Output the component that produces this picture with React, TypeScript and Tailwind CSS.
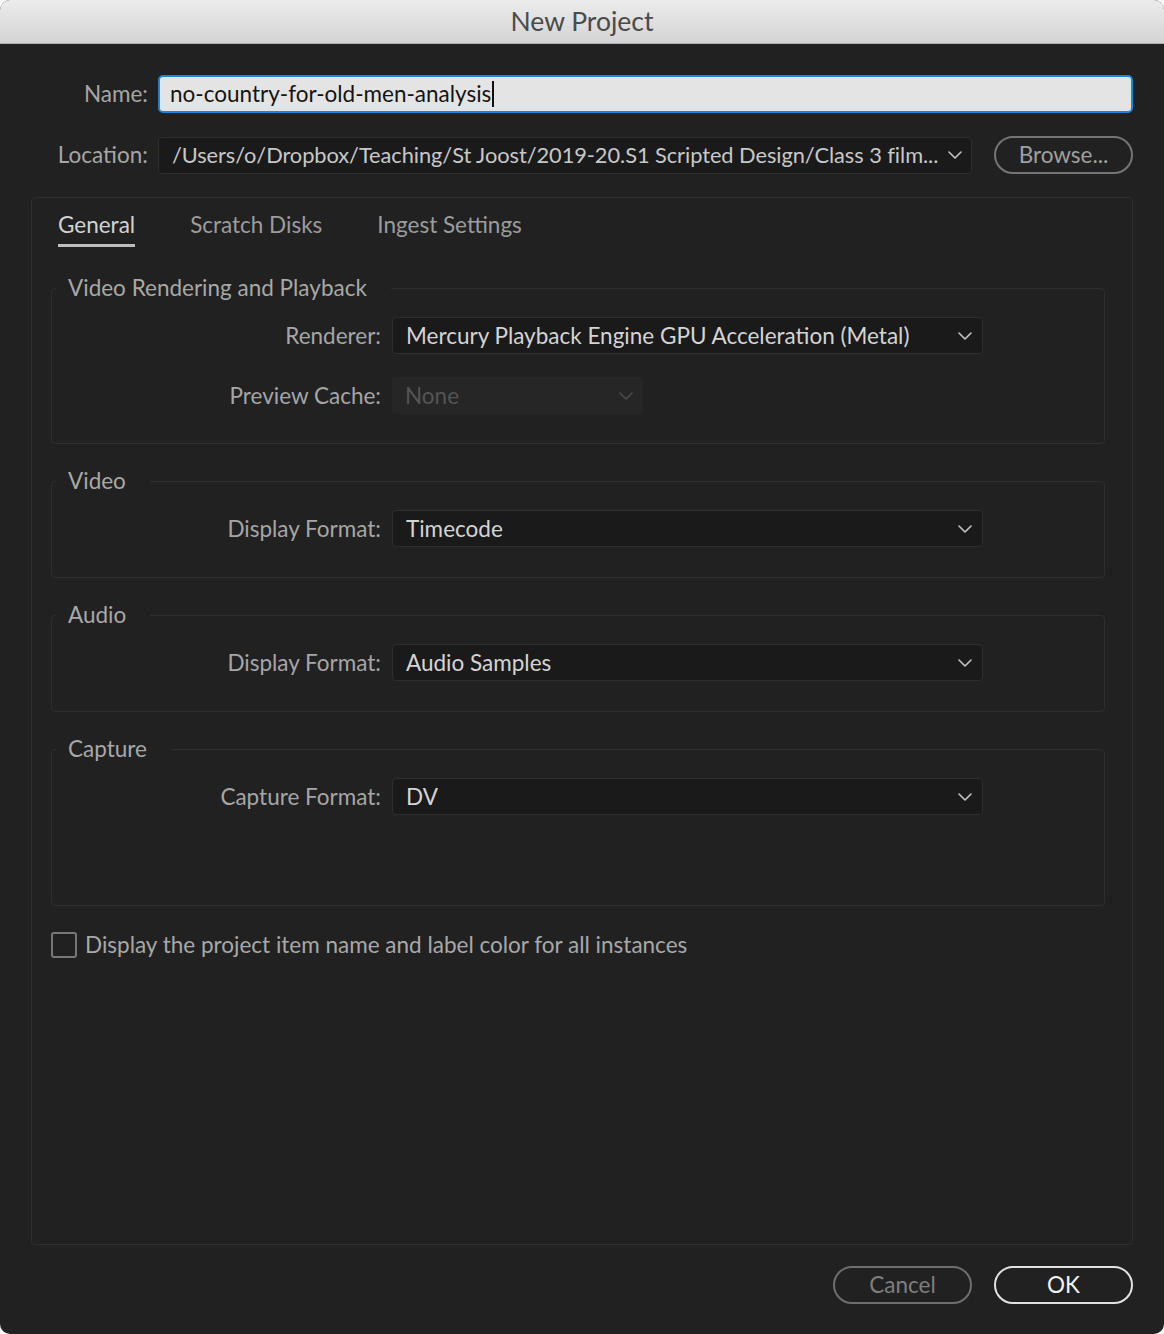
import React from "react";

const font = { fontFamily: "Lato, 'Open Sans', sans-serif" };

const Chevron = ({ dim = false }: { dim?: boolean }) => (
  <svg width="14" height="8" viewBox="0 0 14 8" fill="none" className="shrink-0">
    <path d="M1 1l6 6 6-6" stroke={dim ? "#4a4a4a" : "#c4c4c4"} strokeWidth="1.6" strokeLinecap="round" strokeLinejoin="round" />
  </svg>
);

const Select = ({ value, width = "w-[591px]", disabled = false }: { value: string; width?: string; disabled?: boolean }) => (
  <div
    className={`${width} h-[37px] rounded-[4px] flex items-center justify-between pl-[13px] pr-[10px] ${
      disabled ? "bg-[#262626] text-[#545454]" : "bg-[#1a1a1a] border border-[#2e2e2e] text-[#d4d4d4]"
    }`}
  >
    <span className="truncate">{value}</span>
    <Chevron dim={disabled} />
  </div>
);

const Row = ({ label, children }: { label: string; children: React.ReactNode }) => (
  <div className="flex items-center">
    <div className="w-[340px] pr-[11px] text-right text-[#a6a6a6]">{label}</div>
    {children}
  </div>
);

const Group = ({ title, height, children }: { title: string; height: string; children: React.ReactNode }) => (
  <fieldset className={`${height} border border-[#2e2e2e] rounded-[4px]`}>
    <legend className="ml-[4px] pl-[12px] pr-[24px] leading-[28px] text-[#a8a8a8]">{title}</legend>
    <div className="pt-[15px] flex flex-col gap-[23px]">{children}</div>
  </fieldset>
);

export default function App() {
  return (
    <div className="w-[1164px] h-[1334px] bg-white">
      <div className="w-full h-full rounded-[10px] overflow-hidden bg-[#212121] flex flex-col text-[22.5px]" style={font}>
        <div className="h-[44px] shrink-0 bg-gradient-to-b from-[#ececec] to-[#d4d4d4] border-b border-[#b0b0b0] flex items-center justify-center text-[26.5px] text-[#4a4a4a]">
          New Project
        </div>

        <div className="flex-1 flex flex-col px-[31px] pt-[31px]">
          <div className="flex items-center">
            <div className="w-[127px] pr-[10px] text-right text-[#a6a6a6]">Name:</div>
            <div className="flex-1 h-[38px] rounded-[5px] bg-[#e4e4e4] border-2 border-[#1b84dc] flex items-center pl-[10px] text-[#141414]">
              no-country-for-old-men-analysis
              <span className="inline-block w-[2px] h-[26px] bg-[#111] ml-[1px]" />
            </div>
          </div>

          <div className="flex items-center mt-[23px]">
            <div className="w-[127px] pr-[10px] text-right text-[#a6a6a6]">Location:</div>
            <div className="w-[815px] h-[37px] rounded-[4px] bg-[#1a1a1a] border border-[#2e2e2e] flex items-center justify-between pl-[13px] pr-[9px] text-[#c8c8c8]">
              <span className="whitespace-nowrap text-[21.8px] tracking-[-0.05px]">
                /Users/o/Dropbox/Teaching/St Joost/2019-20.S1 Scripted Design/Class 3 film...
              </span>
              <Chevron />
            </div>
            <button className="ml-[22px] w-[139px] h-[38px] rounded-full border-2 border-[#757575] text-[#a0a0a0]">
              Browse...
            </button>
          </div>

          <div className="mt-[23px] h-[1048px] border border-[#2e2e2e] rounded-[4px] pl-[19px] pr-[27px] flex flex-col">
            <div className="flex items-end gap-[55px] ml-[7px] pt-[13px] text-[#9c9c9c]">
              <div className="flex flex-col">
                <span className="text-[#d2d2d2] leading-[28px]">General</span>
                <span className="mt-[5px] h-[3px] bg-[#bdbdbd]" />
              </div>
              <span className="leading-[28px] mb-[8px]">Scratch Disks</span>
              <span className="leading-[28px] mb-[8px]">Ingest Settings</span>
            </div>

            <div className="mt-[27px] flex flex-col gap-[23px]">
              <Group title="Video Rendering and Playback" height="h-[170px]">
                <Row label="Renderer:">
                  <Select value="Mercury Playback Engine GPU Acceleration (Metal)" />
                </Row>
                <Row label="Preview Cache:">
                  <Select value="None" width="w-[251px]" disabled />
                </Row>
              </Group>
              <Group title="Video" height="h-[111px]">
                <Row label="Display Format:">
                  <Select value="Timecode" />
                </Row>
              </Group>
              <Group title="Audio" height="h-[111px]">
                <Row label="Display Format:">
                  <Select value="Audio Samples" />
                </Row>
              </Group>
              <Group title="Capture" height="h-[171px]">
                <Row label="Capture Format:">
                  <Select value="DV" />
                </Row>
              </Group>
            </div>

            <div className="mt-[22px] flex items-center">
              <span className="w-[26px] h-[26px] rounded-[3px] border-2 border-[#777]" />
              <span className="ml-[8px] text-[#a8a8a8]">Display the project item name and label color for all instances</span>
            </div>
          </div>

          <div className="mt-[21px] flex justify-end gap-[22px]">
            <button className="w-[139px] h-[38px] rounded-full border-2 border-[#6e6e6e] text-[#7e7e7e]">Cancel</button>
            <button className="w-[139px] h-[38px] rounded-full border-2 border-[#e2e2e2] text-[#f2f2f2]">OK</button>
          </div>
        </div>
      </div>
    </div>
  );
}
